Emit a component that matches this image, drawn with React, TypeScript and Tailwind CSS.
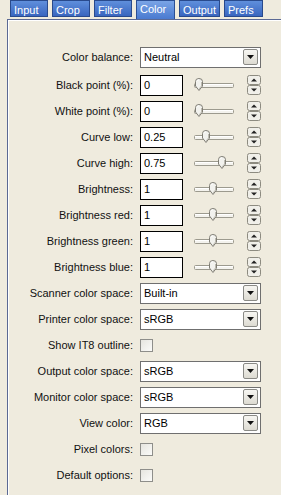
import React from "react";

const font = { fontFamily: '"Liberation Sans", Arial, sans-serif' };

const tabs = [
  { name: "Input", w: "w-[38px]" },
  { name: "Crop", w: "w-[38px]" },
  { name: "Filter", w: "w-[38px]" },
  { name: "Color", w: "w-[39px]", active: true },
  { name: "Output", w: "w-[41px]" },
  { name: "Prefs", w: "w-[39px]" },
];

const Slider = ({ pos }: { pos: number }) => (
  <svg width="41" height="14" viewBox="0 0 41 14" className="ml-[11px]">
    <rect x="0.5" y="5.5" width="39" height="4" rx="1" fill="#f4f3ee" stroke="#9c9a8e" />
    <line x1="1" y1="6.5" x2="39" y2="6.5" stroke="#ffffff" />
    <g transform={`translate(${pos},0)`}>
      <path
        d="M0.5 3.5 Q0.5 0.5 4 0.5 Q7.5 0.5 7.5 3.5 L7.5 8 L4 12.5 L0.5 8 Z"
        fill="#f2f2ee"
        stroke="#7f7d74"
      />
      <path d="M2 3 Q2 1.8 4 1.8" fill="none" stroke="#ffffff" />
      <path d="M6.5 4 L6.5 8 L4 11" fill="none" stroke="#bdbbb1" />
    </g>
  </svg>
);

const Spinner = () => (
  <svg width="14" height="20" viewBox="0 0 14 20" className="ml-[12px]">
    <rect x="0.5" y="0.5" width="13" height="9" rx="2" fill="#f0efe9" stroke="#8d8b80" />
    <rect x="0.5" y="10.5" width="13" height="9" rx="2" fill="#f0efe9" stroke="#8d8b80" />
    <path d="M4 6.5 L10 6.5 L7 3.5 Z" fill="#222" />
    <path d="M4 13.5 L10 13.5 L7 16.5 Z" fill="#222" />
  </svg>
);

const Select = ({ value }: { value: string }) => (
  <div className="w-[121px] h-[21px] bg-white border border-[#6f6f6f] flex items-center justify-between pl-[3px] pr-[2px]">
    <span className="text-[11px] text-black leading-none">{value}</span>
    <div className="w-[15px] h-[16px] border border-[#8a8a86] rounded-[2px] bg-gradient-to-b from-[#f7f6f2] to-[#dddbd2] flex items-center justify-center">
      <svg width="7" height="4" viewBox="0 0 7 4">
        <path d="M0 0 L7 0 L3.5 4 Z" fill="#111" />
      </svg>
    </div>
  </div>
);

const Check = () => (
  <div className="w-[13px] h-[13px] border border-[#8e8e8a] bg-gradient-to-br from-[#e6e5df] to-[#fbfbf9]" />
);

const NumField = ({ value, pos }: { value: string; pos: number }) => (
  <div className="flex items-center">
    <div className="w-[43px] h-[21px] bg-white border border-black flex items-center pl-[3px]">
      <span className="text-[11px] text-black leading-none">{value}</span>
    </div>
    <Slider pos={pos} />
    <Spinner />
  </div>
);

type Row = { label: string; kind: "select" | "num" | "check"; value?: string; pos?: number };

const rows: Row[] = [
  { label: "Black point (%):", kind: "num", value: "0", pos: 1 },
  { label: "White point (%):", kind: "num", value: "0", pos: 1 },
  { label: "Curve low:", kind: "num", value: "0.25", pos: 8 },
  { label: "Curve high:", kind: "num", value: "0.75", pos: 24 },
  { label: "Brightness:", kind: "num", value: "1", pos: 15 },
  { label: "Brightness red:", kind: "num", value: "1", pos: 15 },
  { label: "Brightness green:", kind: "num", value: "1", pos: 15 },
  { label: "Brightness blue:", kind: "num", value: "1", pos: 15 },
  { label: "Scanner color space:", kind: "select", value: "Built-in" },
  { label: "Printer color space:", kind: "select", value: "sRGB" },
  { label: "Show IT8 outline:", kind: "check" },
  { label: "Output color space:", kind: "select", value: "sRGB" },
  { label: "Monitor color space:", kind: "select", value: "sRGB" },
  { label: "View color:", kind: "select", value: "RGB" },
  { label: "Pixel colors:", kind: "check" },
  { label: "Default options:", kind: "check" },
];

const FormRow = ({ row }: { row: Row }) => (
  <div className="flex items-center h-[26px]">
    <div className="w-[125px] text-right text-[11px] text-[#111]">{row.label}</div>
    <div className="ml-[7px]">
      {row.kind === "select" && <Select value={row.value!} />}
      {row.kind === "num" && <NumField value={row.value!} pos={row.pos!} />}
      {row.kind === "check" && <Check />}
    </div>
  </div>
);

export default function App() {
  return (
    <div className="w-[281px] h-[495px] overflow-hidden bg-[#efebde]" style={font}>
      {/* Tabs */}
      <div className="flex items-end gap-[4px] pl-[10px] h-[19px]">
        {tabs.map((t) =>
          t.active ? (
            <div
              key={t.name}
              className={`${t.w} h-[19px] self-start bg-gradient-to-b from-[#7aa4e6] to-[#4a7ad0] border border-b-0 border-[#2c4f94] text-white text-[11px] leading-none pl-[3px] pt-[3px]`}
            >
              {t.name}
            </div>
          ) : (
            <div
              key={t.name}
              className={`${t.w} h-[17px] mb-[2px] bg-gradient-to-b from-[#5f8fdc] to-[#3a66bf] border border-[#294a8c] text-white text-[11px] leading-none pl-[3px] pt-[4px]`}
            >
              {t.name}
            </div>
          )
        )}
      </div>

      {/* Panel */}
      <div className="ml-[7px] border-t border-l border-[#5b6994] h-[476px] pt-[24px] shadow-[inset_1px_1px_0_#ffffff]">
        <FormRow row={{ label: "Color balance:", kind: "select", value: "Neutral" }} />
        <div className="h-[2px]" />
        {rows.map((r) => (
          <FormRow key={r.label} row={r} />
        ))}
      </div>
    </div>
  );
}
